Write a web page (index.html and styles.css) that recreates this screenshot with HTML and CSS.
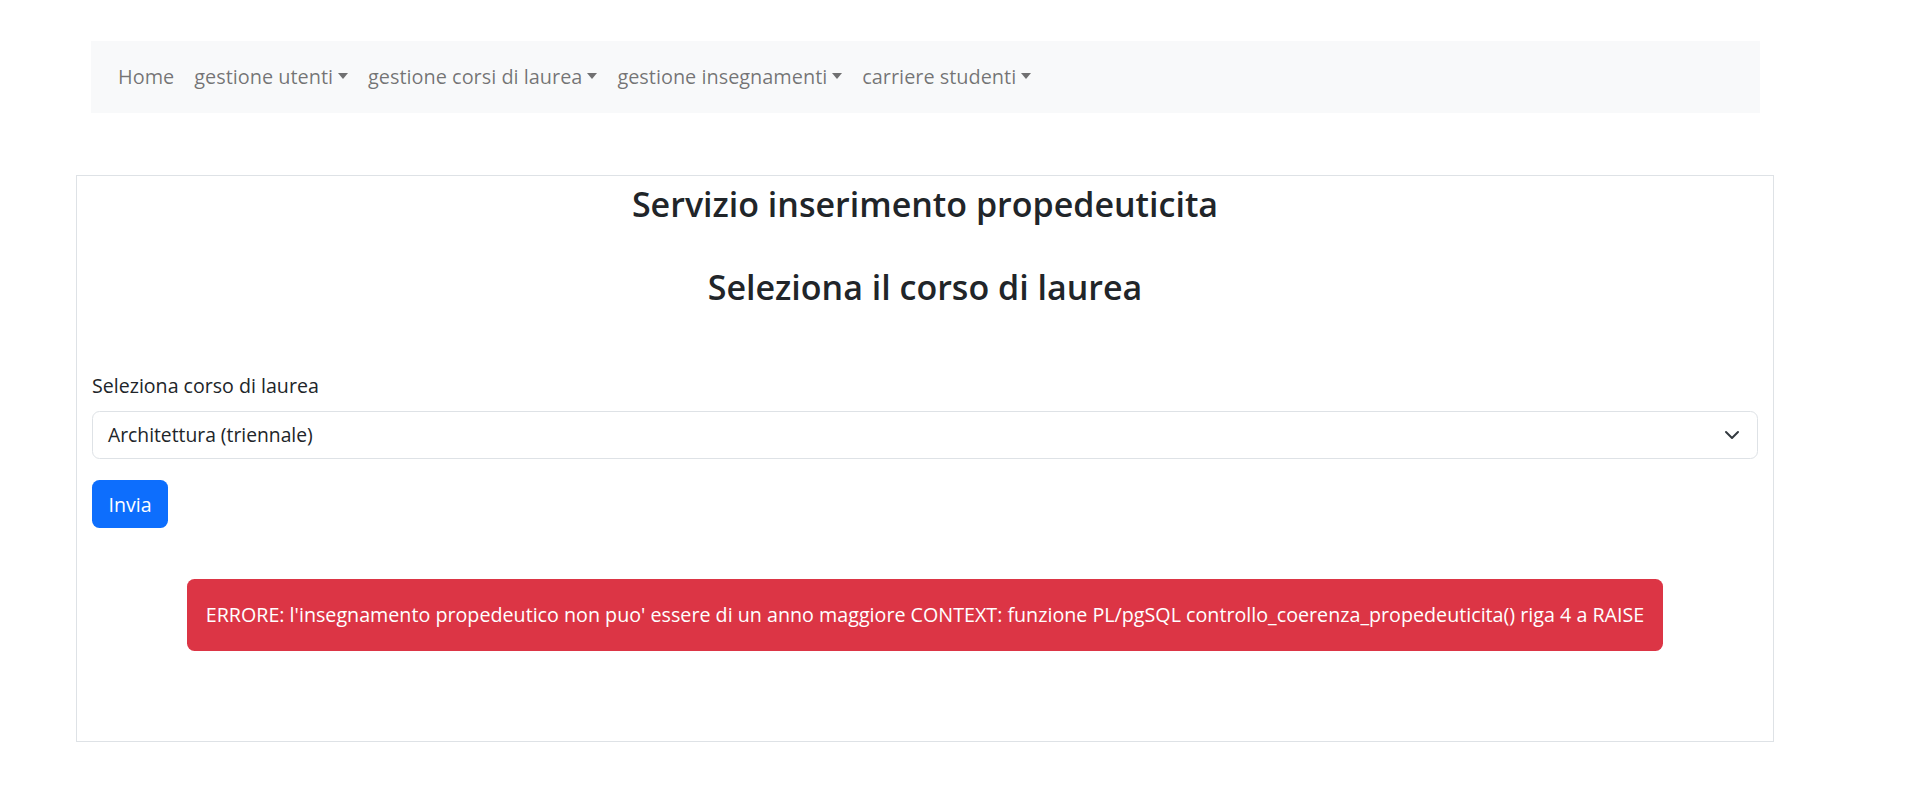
FILE: index.html
```html
<!DOCTYPE html>
<html lang="it">
<head>
<meta charset="utf-8">
<title>Servizio inserimento propedeuticita</title>
<link rel="stylesheet" href="styles.css">
</head>
<body>
<nav class="navbar">
  <ul class="nav">
    <li><a class="nav-link" href="#">Home</a></li>
    <li><a class="nav-link toggle" href="#">gestione utenti</a></li>
    <li><a class="nav-link toggle" href="#">gestione corsi di laurea</a></li>
    <li><a class="nav-link toggle" href="#">gestione insegnamenti</a></li>
    <li><a class="nav-link toggle" href="#">carriere studenti</a></li>
  </ul>
</nav>
<main class="card">
  <h3 class="title">Servizio inserimento propedeuticita</h3>
  <h3 class="title second">Seleziona il corso di laurea</h3>
  <form class="form">
    <label class="label">Seleziona corso di laurea</label>
    <div class="select">
      <span>Architettura (triennale)</span>
      <svg class="chev" width="16" height="12" viewBox="0 0 16 12"><path d="M2 3l6 6 6-6" fill="none" stroke="#343a40" stroke-width="2" stroke-linecap="round" stroke-linejoin="round"/></svg>
    </div>
    <button class="btn" type="button">Invia</button>
  </form>
  <div class="alert">ERRORE: l'insegnamento propedeutico non puo' essere di un anno maggiore CONTEXT: funzione PL/pgSQL controllo_coerenza_propedeuticita() riga 4 a RAISE</div>
</main>
</body>
</html>
```
FILE: styles.css
```css
* { box-sizing: border-box; }
html, body { margin: 0; padding: 0; background: #fff; }
body {
  font-family: "Open Sans", "Noto Sans", sans-serif;
  font-size: 20px;
  line-height: 1.5;
  color: #212529;
}
.navbar {
  margin: 41px 0 0 91px;
  width: 1669px;
  height: 72px;
  background: #f8f9fa;
  display: flex;
  align-items: center;
  padding-left: 17px;
}
.nav {
  list-style: none;
  margin: 0;
  padding: 0;
  display: flex;
}
.nav-link {
  display: block;
  padding: 10px 10px;
  color: rgba(0,0,0,0.55);
  text-decoration: none;
  font-size: 19.9px;
}
.toggle::after {
  content: "";
  display: inline-block;
  margin-left: 5px;
  vertical-align: 5px;
  border-top: 6px solid;
  border-left: 5px solid transparent;
  border-right: 5px solid transparent;
}
.card {
  margin: 62px 0 0 76px;
  width: 1698px;
  height: 567px;
  border: 1px solid #dee2e6;
  padding: 7px 15px 0 15px;
}
.title {
  margin: 0;
  text-align: center;
  font-size: 34px;
  font-weight: 600;
  line-height: 42px;
}
.second { margin-top: 41px; }
.form { display: flex; flex-direction: column; align-items: flex-start; margin-top: 63px; }
.label { display: block; margin-bottom: 10px; line-height: 30px; font-size: 19.6px; }
.select {
  width: 100%;
  height: 48px;
  border: 1px solid #dee2e6;
  border-radius: 7.5px;
  display: flex;
  align-items: center;
  justify-content: space-between;
  padding: 0 17px 0 15px;
  font-size: 19.3px;
}
.chev { display: block; }
.btn {
  margin-top: 21px;
  height: 48px;
  width: 76px;
  padding: 0;
  border: 0;
  border-radius: 7.5px;
  background: #0d6efd;
  color: #fff;
  font-family: inherit;
  font-size: 19.6px;
}
.alert {
  margin: 51px 95px 0 95px;
  height: 72px;
  border-radius: 7.5px;
  background: #dc3545;
  color: #fff;
  display: flex;
  align-items: center;
  justify-content: center;
  font-size: 19.7px;
  white-space: nowrap;
}
```
